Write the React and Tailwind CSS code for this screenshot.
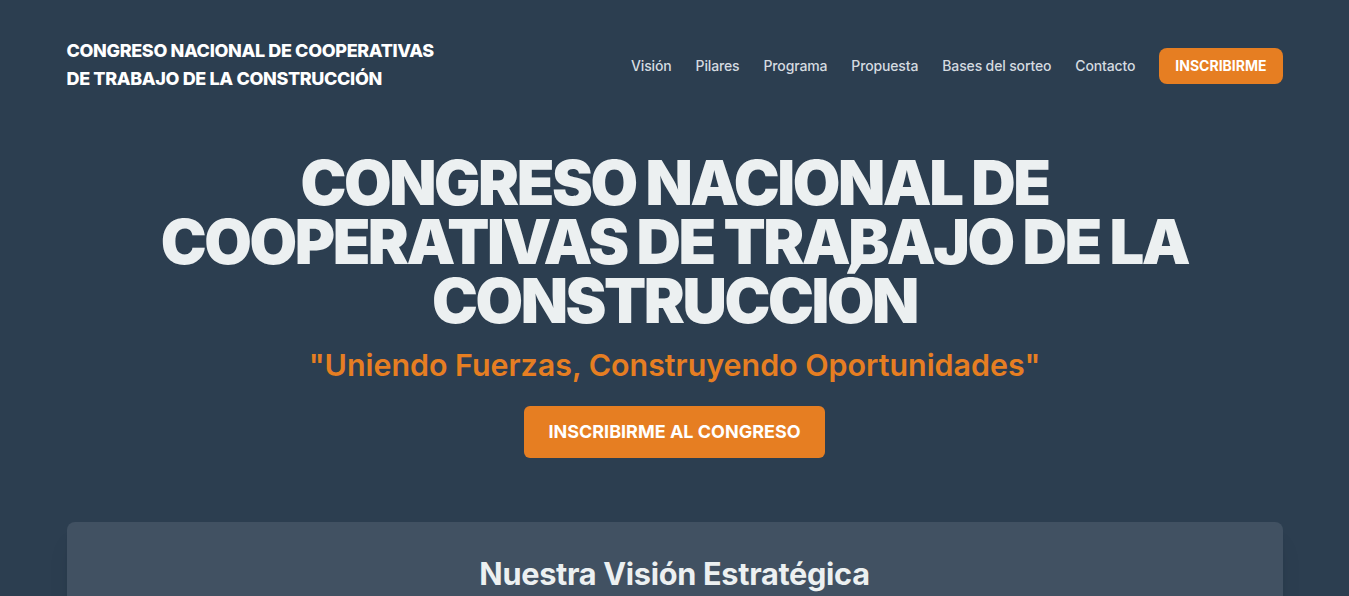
import React from 'react';

const navLinks = ['Visión', 'Pilares', 'Programa', 'Propuesta', 'Bases del sorteo', 'Contacto'];

export default function App() {
  return (
    <div className="min-h-screen bg-[#2c3e50] text-[#ecf0f1]" style={{ fontFamily: 'Inter, "Noto Sans", sans-serif' }}>
      {/* header */}
      <header className="mx-auto flex w-[1216px] items-center justify-between pt-[37px]">
        <div className="w-[380px] text-[18px] font-extrabold uppercase leading-[28px] tracking-[-0.02em] text-white">
          Congreso Nacional de Cooperativas de Trabajo de la Construcción
        </div>
        <nav className="flex items-center gap-6">
          {navLinks.map((link) => (
            <a key={link} href="#" className="text-[14px] font-medium tracking-[-0.01em] text-[#d5dbe0]">
              {link}
            </a>
          ))}
          <a href="#" className="mt-[2px] rounded-lg bg-[#e67e22] px-4 py-2 text-[14px] font-bold leading-5 text-white">
            INSCRIBIRME
          </a>
        </nav>
      </header>

      {/* hero */}
      <section className="mx-auto flex w-[1216px] flex-col items-center pt-[60px] text-center">
        <h1 className="w-[1080px] text-[61.5px] font-black uppercase leading-[59px] tracking-[-0.04em] text-[#ecf0f1]">
          Congreso Nacional de Cooperativas de Trabajo de la Construcción
        </h1>
        <p className="mt-[17px] text-[30.4px] font-semibold leading-[36px] text-[#e67e22]">
          "Uniendo Fuerzas, Construyendo Oportunidades"
        </p>
        <a href="#" className="mt-[23px] rounded-md bg-[#e67e22] px-6 py-[13px] text-[18px] font-bold leading-[26px] text-white">
          INSCRIBIRME AL CONGRESO
        </a>
      </section>

      {/* vision */}
      <section className="mx-auto mt-[64px] w-[1216px] rounded-lg bg-[#415162] px-10 pt-[32px] pb-10 shadow-xl">
        <h2 className="text-center text-[30.7px] font-bold leading-[40px] tracking-[-0.01em] text-[#ecf0f1]">
          Nuestra Visión Estratégica
        </h2>
      </section>
    </div>
  );
}
